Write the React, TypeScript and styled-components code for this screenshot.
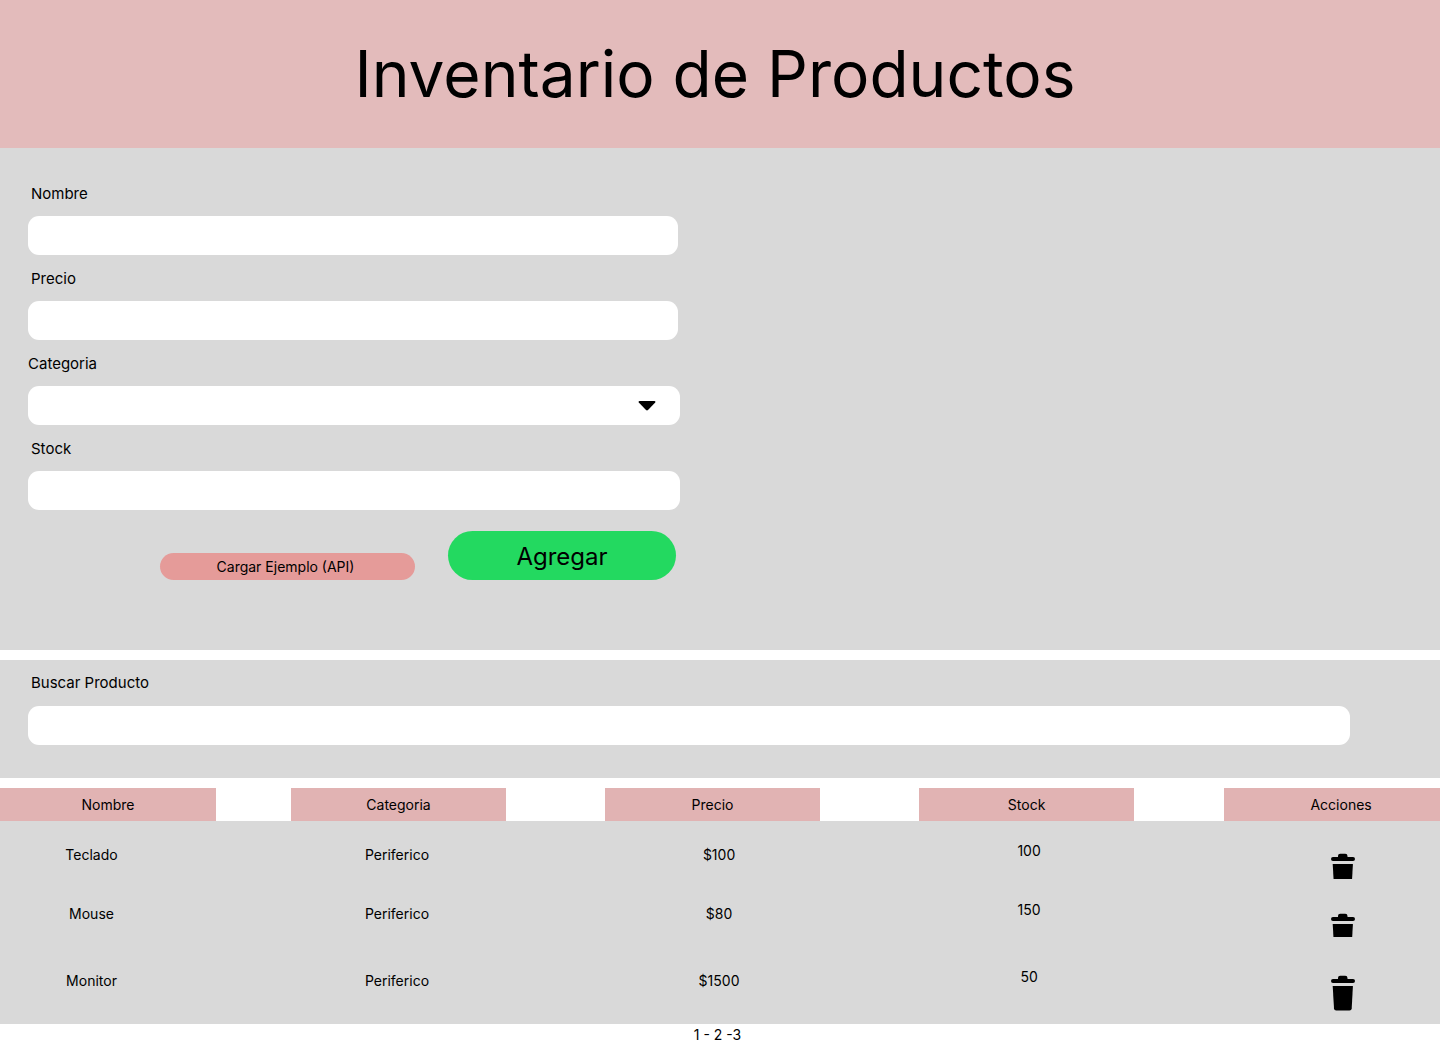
import React from "react";
import styled, { createGlobalStyle } from "styled-components";

const GlobalStyle = createGlobalStyle`
  *, *::before, *::after { box-sizing: border-box; }
  body {
    margin: 0;
    background: #fff;
    color: #000;
    font-family: Inter, "Liberation Sans", sans-serif;
    font-size: 14px;
    line-height: 18px;
  }
  button, input, select { font: inherit; color: inherit; }
`;

const Page = styled.main`
  display: flex;
  flex-direction: column;
`;

const Header = styled.header`
  display: flex;
  justify-content: center;
  padding: 34px 34px 34px 24px;
  background: #e3bbbb;
`;

const Title = styled.h1`
  margin: 0;
  font-size: 64px;
  line-height: 80px;
  font-weight: 400;
  text-align: center;
`;

const Panels = styled.div`
  display: flex;
  flex-direction: column;
  gap: 10px;
`;

const FormPanel = styled.section`
  padding: 37px 28px 70px;
  background: #d9d9d9;
`;

const SearchPanel = styled.section`
  padding: 14px 90px 33px 28px;
  background: #d9d9d9;
`;

const Form = styled.form`
  display: flex;
  flex-direction: column;
  gap: 15px;
  max-width: 652px;
`;

const Field = styled.div<{ $inset?: boolean; $gap?: number }>`
  display: flex;
  flex-direction: column;
  gap: ${(p) => p.$gap ?? 13}px;
  padding-right: ${(p) => (p.$inset ? "2px" : "0")};
`;

const Label = styled.label<{ $flush?: boolean }>`
  padding-left: ${(p) => (p.$flush ? "0" : "3px")};
  font-size: 15px;
`;

const Input = styled.input`
  width: 100%;
  height: 39px;
  padding: 0 14px;
  border: 0;
  border-radius: 11px;
  background: #fff;
`;

const SelectBox = styled.div`
  position: relative;
  display: flex;
`;

const Select = styled.select`
  width: 100%;
  height: 39px;
  padding: 0 48px 0 14px;
  border: 0;
  border-radius: 11px;
  background: #fff;
  appearance: none;
`;

const Caret = styled.svg`
  position: absolute;
  top: 15px;
  right: 24px;
  pointer-events: none;
`;

const Actions = styled.div`
  display: flex;
  justify-content: flex-end;
  align-items: flex-end;
  gap: 33px;
  padding: 6px 4px 0 0;
`;

const LoadButton = styled.button`
  width: 255px;
  height: 27px;
  padding: 0 16px 0 12px;
  border: 0;
  border-radius: 14px;
  background: #e59b99;
  cursor: pointer;
`;

const AddButton = styled.button`
  width: 228px;
  height: 49px;
  padding: 2px 0 0;
  border: 0;
  border-radius: 25px;
  background: #23d960;
  font-size: 24px;
  line-height: 30px;
  cursor: pointer;
`;

const Table = styled.table`
  width: 100%;
  table-layout: fixed;
  border-collapse: separate;
  border-spacing: 0;
`;

const HeadCell = styled.th<{ $gap: number; $left?: number }>`
  height: 33px;
  padding: 0 0 0 ${(p) => p.$left ?? 0}px;
  border-left: ${(p) => p.$gap}px solid #fff;
  background: #e1b3b3;
  font-weight: 400;
  text-align: center;
`;

const Row = styled.tr<{ $height: number }>`
  height: ${(p) => p.$height}px;
  background: #d9d9d9;
`;

const Cell = styled.td<{ $top: number; $left?: number; $right?: number }>`
  padding: ${(p) => `${p.$top}px ${p.$right ?? 0}px 0 ${p.$left ?? 0}px`};
  text-align: center;
  vertical-align: top;
`;

const IconButton = styled.button`
  display: flex;
  margin: 0 auto;
  padding: 0;
  border: 0;
  background: none;
  cursor: pointer;
`;

const Pagination = styled.nav`
  padding: 2px 5px 3px 0;
  text-align: center;
`;

const PageLink = styled.a`
  color: inherit;
  text-decoration: none;
`;

const columns = [
  { name: "Nombre", width: "15%", gap: 0 },
  { name: "Categoria", width: "20.14%", gap: 75 },
  { name: "Precio", width: "21.81%", gap: 99 },
  { name: "Stock", width: "21.81%", gap: 99 },
  { name: "Acciones", width: "21.24%", gap: 90, left: 18 },
];

const products = [
  { name: "Teclado", category: "Periferico", price: "$100", stock: "100", height: 59, icon: 26, iconTop: 32 },
  { name: "Mouse", category: "Periferico", price: "$80", stock: "150", height: 67, icon: 24, iconTop: 33 },
  { name: "Monitor", category: "Periferico", price: "$1500", stock: "50", height: 77, icon: 36, iconTop: 28 },
];

// The bin is drawn at its full depth; a lower height shows only its upper part.
function TrashIcon({ height }: { height: number }) {
  return (
    <svg width="24" height={height} viewBox={`0 0 24 ${height}`} aria-hidden="true">
      <path d="M7 4V3Q7 .8 9.200 .8h5Q16.500 .8 16.500 3V4H22a2 2 0 0 1 0 4H2a2 2 0 0 1 0-4z" />
      <path d="M1.700 11h20.200l-1.200 22.500q-.2 2-2.200 2H5.200q-2 0-2.200-2z" />
    </svg>
  );
}

export default function App() {
  return (
    <>
      <GlobalStyle />
      <Page>
        <Header>
          <Title>Inventario de Productos</Title>
        </Header>
        <Panels>
          <FormPanel>
            <Form onSubmit={(e) => e.preventDefault()}>
              <Field $inset>
                <Label htmlFor="nombre">Nombre</Label>
                <Input id="nombre" type="text" />
              </Field>
              <Field $inset>
                <Label htmlFor="precio">Precio</Label>
                <Input id="precio" type="text" inputMode="decimal" />
              </Field>
              <Field>
                <Label htmlFor="categoria" $flush>Categoria</Label>
                <SelectBox>
                  <Select id="categoria" defaultValue="">
                    <option value="" />
                  </Select>
                  <Caret width="18" height="10" viewBox="0 0 18 10" aria-hidden="true">
                    <path d="M1.500 0h15q1.500.3.7 1.500L10 9q-1 .9-2 0L.8 1.500Q0 .3 1.500 0z" />
                  </Caret>
                </SelectBox>
              </Field>
              <Field>
                <Label htmlFor="stock">Stock</Label>
                <Input id="stock" type="text" inputMode="numeric" />
              </Field>
              <Actions>
                <LoadButton type="button">Cargar Ejemplo (API)</LoadButton>
                <AddButton type="submit">Agregar</AddButton>
              </Actions>
            </Form>
          </FormPanel>
          <SearchPanel>
            <Field $gap={14}>
              <Label htmlFor="buscar">Buscar Producto</Label>
              <Input id="buscar" type="search" />
            </Field>
          </SearchPanel>
          <Table>
            <colgroup>
              {columns.map((c) => (
                <col key={c.name} style={{ width: c.width }} />
              ))}
            </colgroup>
            <thead>
              <tr>
                {columns.map((c) => (
                  <HeadCell key={c.name} $gap={c.gap} $left={c.left} scope="col">{c.name}</HeadCell>
                ))}
              </tr>
            </thead>
            <tbody>
              {products.map((p) => (
                <Row key={p.name} $height={p.height}>
                  <Cell $top={25} $right={33}>{p.name}</Cell>
                  <Cell $top={25} $left={72}>{p.category}</Cell>
                  <Cell $top={25} $left={112}>{p.price}</Cell>
                  <Cell $top={21} $left={104}>{p.stock}</Cell>
                  <Cell $top={p.iconTop} $left={112}>
                    <IconButton type="button" aria-label={`Eliminar ${p.name}`}>
                      <TrashIcon height={p.icon} />
                    </IconButton>
                  </Cell>
                </Row>
              ))}
            </tbody>
          </Table>
        </Panels>
        <Pagination aria-label="Paginas">
          <PageLink href="#1">1</PageLink> - <PageLink href="#2">2</PageLink> -<PageLink href="#3">3</PageLink>
        </Pagination>
      </Page>
    </>
  );
}
